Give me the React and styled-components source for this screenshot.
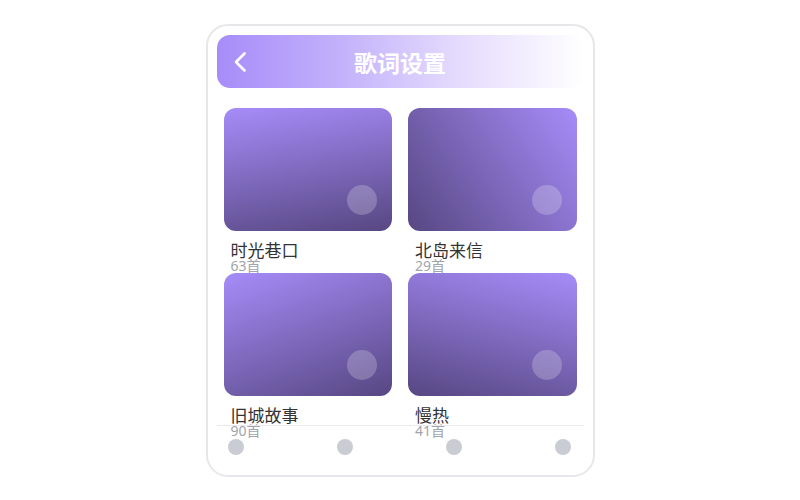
import React from "react";
import styled, { createGlobalStyle } from "styled-components";

const Global = createGlobalStyle`
  html, body { margin: 0; padding: 0; background: #ffffff; }
  body { font-family: "Noto Sans", "Noto Sans CJK SC", sans-serif; }
  * { box-sizing: border-box; }
`;

const Page = styled.div`
  width: 800px;
  height: 500px;
  display: flex;
  justify-content: center;
  padding-top: 24px;
`;

const Phone = styled.div`
  width: 389px;
  height: 453px;
  border: 2px solid #e7e7eb;
  border-radius: 22px;
  background: #ffffff;
  padding: 9px;
  display: flex;
  flex-direction: column;
`;

const Header = styled.div`
  height: 53px;
  flex: none;
  border-radius: 13px;
  background: linear-gradient(90deg, #a68cf9 0%, #c4b3fb 35%, #e4dafd 65%, #ffffff 100%);
  display: grid;
  grid-template-columns: 40px 1fr 40px;
  align-items: center;
`;

const Back = styled.button`
  border: none;
  background: none;
  padding: 0 0 0 17px;
  display: flex;
  align-items: center;
  cursor: pointer;
`;

const Title = styled.h1`
  margin: 0;
  text-align: center;
  color: #ffffff;
  font-family: "Noto Sans CJK SC", sans-serif;
  font-weight: 700;
  font-size: 23px;
  line-height: 30px;
`;

const Main = styled.div`
  flex: 1;
  min-height: 0;
  padding: 20px 7px 0;
`;

const Grid = styled.div`
  display: grid;
  grid-template-columns: 1fr 1fr;
  column-gap: 16px;
`;

const Item = styled.div`
  display: flex;
  flex-direction: column;
`;

const Cover = styled.div`
  height: 123px;
  border-radius: 12px;
  background: linear-gradient(${(p) => p.$angle}deg, #a68cf9 0%, #574782 100%);
  display: flex;
  align-items: flex-end;
  justify-content: flex-end;
  padding: 0 15px 16px 0;
`;

const Play = styled.div`
  width: 30px;
  height: 30px;
  border-radius: 50%;
  background: rgba(255, 255, 255, 0.22);
`;

const Name = styled.div`
  margin: 9px 0 0 7px;
  font-family: "Noto Sans CJK SC", sans-serif;
  font-weight: 400;
  font-size: 17px;
  line-height: 19px;
  color: #333333;
`;

const Count = styled.div`
  margin-left: 7px;
  font-family: "Noto Sans", "Noto Sans CJK SC", sans-serif;
  font-size: 14px;
  line-height: 14px;
  color: #a1a4ab;
`;

const Nav = styled.div`
  height: 41px;
  flex: none;
  border-top: 1px solid #ebebef;
  display: flex;
  justify-content: space-between;
  align-items: flex-start;
  padding: 13px 12px 0 11px;
`;

const Dot = styled.div`
  width: 16px;
  height: 16px;
  border-radius: 50%;
  background: #c9ccd2;
`;

const items = [
  { name: "时光巷口", count: "63首", angle: 170 },
  { name: "北岛来信", count: "29首", angle: 235 },
  { name: "旧城故事", count: "90首", angle: 160 },
  { name: "慢热", count: "41首", angle: 195 },
];

export default function App() {
  return (
    <>
      <Global />
      <Page>
        <Phone>
          <Header>
            <Back aria-label="返回">
              <svg width="12" height="20" viewBox="0 0 12 20" fill="none">
                <path d="M10.5 1.5 L2 10 L10.5 18.5" stroke="#ffffff" strokeWidth="2.6" strokeLinecap="round" strokeLinejoin="round" />
              </svg>
            </Back>
            <Title>歌词设置</Title>
            <span />
          </Header>
          <Main>
            <Grid>
              {items.map((it) => (
                <Item key={it.name}>
                  <Cover $angle={it.angle}>
                    <Play />
                  </Cover>
                  <Name>{it.name}</Name>
                  <Count>{it.count}</Count>
                </Item>
              ))}
            </Grid>
          </Main>
          <Nav>
            <Dot />
            <Dot />
            <Dot />
            <Dot />
          </Nav>
        </Phone>
      </Page>
    </>
  );
}
